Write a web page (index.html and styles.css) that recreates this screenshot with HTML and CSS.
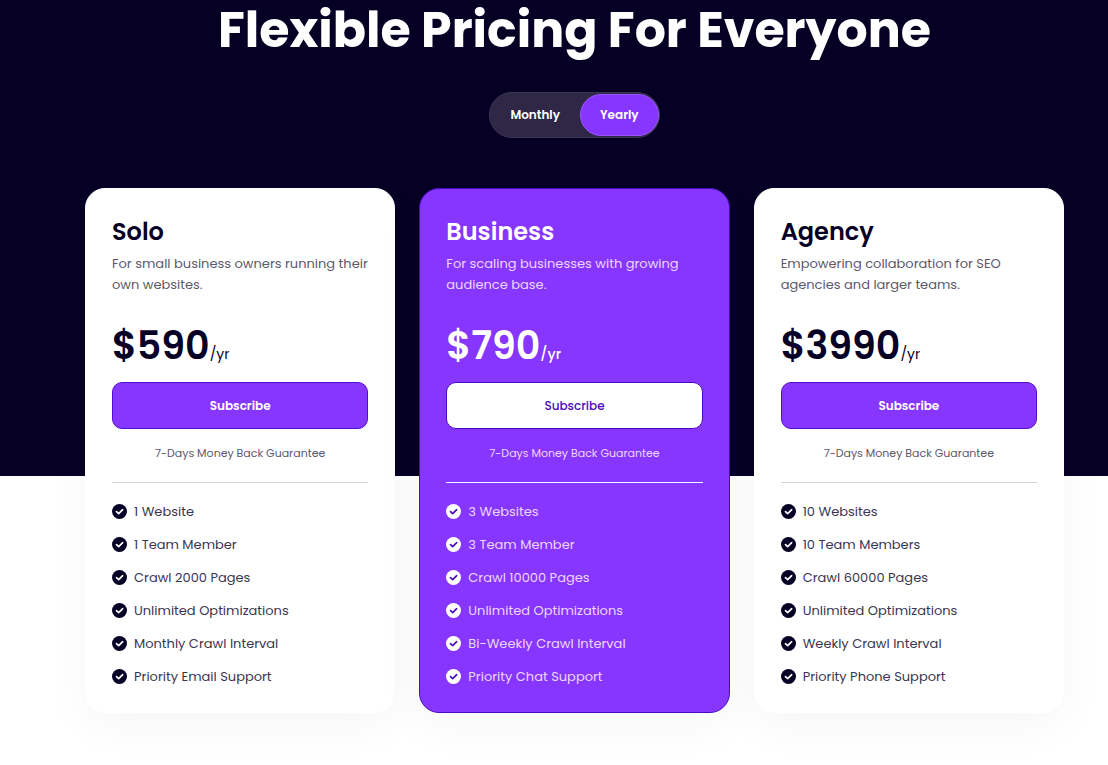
FILE: index.html
```html
<!DOCTYPE html>
<html lang="en">
<head>
<meta charset="utf-8">
<meta name="viewport" content="width=device-width, initial-scale=1">
<title>Flexible Pricing For Everyone</title>
<link rel="stylesheet" href="styles.css">
</head>
<body>
<svg class="sprite" aria-hidden="true">
  <symbol id="check" viewBox="0 0 16 16">
    <circle cx="8" cy="8" r="8" stroke="none" fill="currentColor"/>
    <path d="M4.8 8.2 7.1 10.3 11.4 6.1" fill="none" stroke-width="1.8" stroke-linecap="round" stroke-linejoin="round"/>
  </symbol>
</svg>
<main class="pricing">
  <h1 class="pricing-title">Flexible Pricing For Everyone</h1>
  <div class="toggle" role="group" aria-label="Billing period">
    <button class="toggle-option" type="button" aria-pressed="false">Monthly</button>
    <button class="toggle-option toggle-active" type="button" aria-pressed="true">Yearly</button>
  </div>
  <div class="plans">
    <article class="plan">
      <h2 class="plan-name">Solo</h2>
      <p class="plan-text">For small business owners running their own websites.</p>
      <p class="price">$590<span class="period">/yr</span></p>
      <button class="subscribe" type="button">Subscribe</button>
      <p class="guarantee">7-Days Money Back Guarantee</p>
      <ul class="features">
        <li class="feature"><svg class="icon"><use href="#check"/></svg>1 Website</li>
        <li class="feature"><svg class="icon"><use href="#check"/></svg>1 Team Member</li>
        <li class="feature"><svg class="icon"><use href="#check"/></svg>Crawl 2000 Pages</li>
        <li class="feature"><svg class="icon"><use href="#check"/></svg>Unlimited Optimizations</li>
        <li class="feature"><svg class="icon"><use href="#check"/></svg>Monthly Crawl Interval</li>
        <li class="feature"><svg class="icon"><use href="#check"/></svg>Priority Email Support</li>
      </ul>
    </article>
    <article class="plan plan-featured">
      <h2 class="plan-name">Business</h2>
      <p class="plan-text">For scaling businesses with growing audience base.</p>
      <p class="price">$790<span class="period">/yr</span></p>
      <button class="subscribe" type="button">Subscribe</button>
      <p class="guarantee">7-Days Money Back Guarantee</p>
      <ul class="features">
        <li class="feature"><svg class="icon"><use href="#check"/></svg>3 Websites</li>
        <li class="feature"><svg class="icon"><use href="#check"/></svg>3 Team Member</li>
        <li class="feature"><svg class="icon"><use href="#check"/></svg>Crawl 10000 Pages</li>
        <li class="feature"><svg class="icon"><use href="#check"/></svg>Unlimited Optimizations</li>
        <li class="feature"><svg class="icon"><use href="#check"/></svg>Bi-Weekly Crawl Interval</li>
        <li class="feature"><svg class="icon"><use href="#check"/></svg>Priority Chat Support</li>
      </ul>
    </article>
    <article class="plan">
      <h2 class="plan-name">Agency</h2>
      <p class="plan-text">Empowering collaboration for SEO agencies and larger teams.</p>
      <p class="price">$3990<span class="period">/yr</span></p>
      <button class="subscribe" type="button">Subscribe</button>
      <p class="guarantee">7-Days Money Back Guarantee</p>
      <ul class="features">
        <li class="feature"><svg class="icon"><use href="#check"/></svg>10 Websites</li>
        <li class="feature"><svg class="icon"><use href="#check"/></svg>10 Team Members</li>
        <li class="feature"><svg class="icon"><use href="#check"/></svg>Crawl 60000 Pages</li>
        <li class="feature"><svg class="icon"><use href="#check"/></svg>Unlimited Optimizations</li>
        <li class="feature"><svg class="icon"><use href="#check"/></svg>Weekly Crawl Interval</li>
        <li class="feature"><svg class="icon"><use href="#check"/></svg>Priority Phone Support</li>
      </ul>
    </article>
  </div>
</main>
</body>
</html>
```
FILE: styles.css
```css
:root {
  --ink: #070025;
  --violet: #8736ff;
  --indigo: #4a0bc0;
}

* {
  box-sizing: border-box;
}

body {
  margin: 0;
  background: #fff;
  color: var(--ink);
  font-family: Poppins, Inter, "Open Sans", sans-serif;
  font-size: 13px;
  line-height: 21px;
}

h1, h2, p, ul {
  margin: 0;
  padding: 0;
}

button {
  font: inherit;
  cursor: pointer;
}

.sprite {
  display: block;
  width: 0;
  height: 0;
}

.pricing {
  display: flex;
  flex-direction: column;
  align-items: center;
  padding: 0 44px 52px 85px;
  background: linear-gradient(var(--ink) 476px, #fff 476px);
}

.pricing-title {
  color: #fff;
  font-size: 49px;
  font-weight: 700;
  line-height: 60px;
  text-align: center;
}

.toggle {
  display: flex;
  margin-top: 32px;
  padding: 1px 0;
  border: 1px solid #3d3655;
  border-radius: 24px;
  background: #2e2746;
}

.toggle-option {
  padding: 10px 19px;
  border: 1px solid transparent;
  border-radius: 22px;
  background: none;
  color: #fff;
  font-size: 12px;
  font-weight: 600;
  line-height: 20px;
}

.toggle-active {
  border-color: #9b57ff;
  background: var(--violet);
}

.plans {
  display: grid;
  grid-template-columns: repeat(auto-fit, minmax(270px, 1fr));
  gap: 24px;
  width: 100%;
  margin-top: 50px;
}

.plan {
  padding: 27px 26px 25px;
  border: 1px solid #fff;
  border-radius: 20px;
  background: #fff;
  box-shadow: 0 12px 48px rgba(0, 0, 0, 0.04);
}

.plan-name {
  font-size: 24px;
  font-weight: 600;
  line-height: 32px;
}

.plan-text {
  margin-top: 5px;
  color: #5c586c;
}

.price {
  margin-top: 27px;
  font-size: 38px;
  font-weight: 600;
  line-height: 48px;
}

.period {
  font-size: 14px;
  font-weight: 400;
  line-height: 16px;
}

.subscribe {
  width: 100%;
  height: 47px;
  margin-top: 12px;
  border: 1px solid #5310cc;
  border-radius: 10px;
  background: var(--violet);
  color: #fff;
  font-size: 12px;
  font-weight: 600;
}

.guarantee {
  margin-top: 14px;
  color: #5c586c;
  font-size: 11px;
  text-align: center;
}

.features {
  display: flex;
  flex-direction: column;
  gap: 12px;
  margin-top: 18px;
  padding-top: 18px;
  border-top: 1px solid #d2d0d8;
  list-style: none;
}

.feature {
  display: flex;
  align-items: center;
  gap: 7px;
  color: #3b3650;
}

.icon {
  width: 15px;
  height: 15px;
  color: var(--ink);
  stroke: #fff;
}

.plan-featured {
  border-color: var(--indigo);
  background: var(--violet);
  color: #fff;
}

.plan-featured .plan-text,
.plan-featured .guarantee,
.plan-featured .feature {
  color: #ecd6ff;
}

.plan-featured .period {
  font-weight: 500;
}

.plan-featured .subscribe {
  border-color: var(--indigo);
  background: #fff;
  color: var(--indigo);
  font-weight: 500;
}

.plan-featured .features {
  border-color: #fff;
}

.plan-featured .icon {
  color: #fff;
  stroke: var(--indigo);
}
```
